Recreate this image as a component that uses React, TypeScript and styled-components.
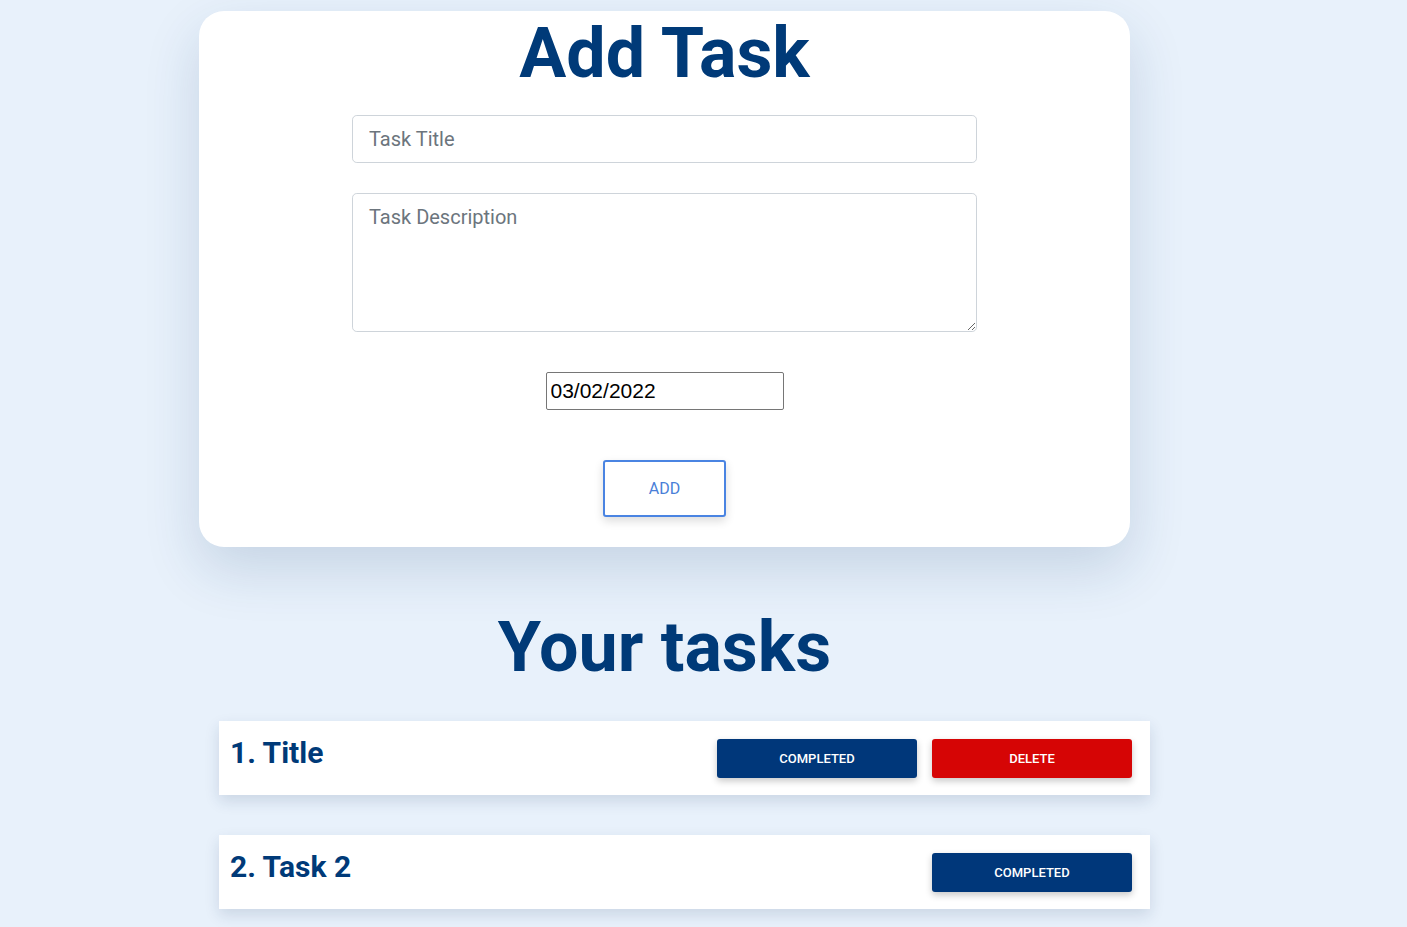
import React from "react";
import styled, { createGlobalStyle } from "styled-components";

const Global = createGlobalStyle`
  html, body { margin: 0; padding: 0; }
  body {
    background: #e8f1fb;
    font-family: Roboto, "Liberation Sans", Arial, sans-serif;
    min-height: 927px;
  }
`;

const Page = styled.div`
  padding: 11px 0 40px 199px;
`;

const Card = styled.section`
  width: 931px;
  box-sizing: border-box;
  background: #fff;
  border-radius: 25px;
  box-shadow: 0 22px 55px rgba(20, 60, 110, 0.16);
  display: flex;
  flex-direction: column;
  align-items: center;
  padding-bottom: 30px;
`;

const BigHeading = styled.h1`
  margin: 0;
  font-family: Roboto, sans-serif;
  font-weight: 700;
  font-size: 70px;
  line-height: 84px;
  color: #003a78;
  text-align: center;
`;

const Form = styled.form`
  display: flex;
  flex-direction: column;
  align-items: center;
  margin-top: 20px;
`;

const TextField = styled.input`
  box-sizing: border-box;
  width: 625px;
  height: 48px;
  padding: 8px 16px;
  font-family: Roboto, sans-serif;
  font-size: 20px;
  line-height: 1.5;
  color: #495057;
  border: 1px solid #ced4da;
  border-radius: 4.8px;
  outline: none;
  &::placeholder { color: #6c757d; }
`;

const TextArea = styled.textarea`
  box-sizing: border-box;
  width: 625px;
  height: 139px;
  margin-top: 30px;
  padding: 8px 16px;
  font-family: Roboto, sans-serif;
  font-size: 20px;
  line-height: 1.5;
  color: #495057;
  border: 1px solid #ced4da;
  border-radius: 4.8px;
  outline: none;
  &::placeholder { color: #6c757d; }
`;

const DateField = styled.input`
  box-sizing: border-box;
  width: 238px;
  height: 38px;
  margin-top: 40px;
  padding: 1px 4px;
  font-family: "Liberation Sans", Arial, sans-serif;
  font-size: 21px;
  color: #000;
  border: 1px solid #767676;
  border-radius: 2px;
  outline: none;
  background: #fff;
`;

const AddButton = styled.button`
  box-sizing: border-box;
  width: 123px;
  height: 57px;
  margin-top: 50px;
  background: #fff;
  border: 2px solid #4a84e2;
  border-radius: 3px;
  box-shadow: 0 4px 10px rgba(0, 0, 0, 0.14);
  color: #4a7fd8;
  font-family: Roboto, sans-serif;
  font-size: 16px;
  font-weight: 400;
  cursor: pointer;
`;

const TasksSection = styled.section`
  width: 931px;
  display: flex;
  flex-direction: column;
  align-items: center;
  margin-top: 58px;
`;

const TaskList = styled.div`
  width: 931px;
  margin-left: 40px;
  margin-top: 32px;
  display: flex;
  flex-direction: column;
  gap: 40px;
`;

const TaskRow = styled.div`
  box-sizing: border-box;
  height: 74px;
  background: #fff;
  box-shadow: 0 6px 14px rgba(20, 50, 90, 0.14);
  display: flex;
  align-items: flex-start;
  padding: 18px 18px 17px 11px;
`;

const TaskTitle = styled.h3`
  flex: 1;
  margin: -2px 0 0;
  font-family: Roboto, sans-serif;
  font-weight: 700;
  font-size: 30px;
  line-height: 32px;
  color: #003a78;
`;

const Actions = styled.div`
  display: flex;
  gap: 15px;
`;

const ActionButton = styled.button<{ $variant: "done" | "delete" }>`
  width: 200px;
  height: 39px;
  border: none;
  border-radius: 3px;
  background: ${(p) => (p.$variant === "delete" ? "#d60505" : "#00377a")};
  color: #fff;
  font-family: Roboto, sans-serif;
  font-size: 13px;
  font-weight: 500;
  text-transform: uppercase;
  box-shadow: 0 3px 7px rgba(0, 0, 0, 0.22);
  cursor: pointer;
`;

const tasks = [
  { id: 1, title: "Title", canDelete: true },
  { id: 2, title: "Task 2", canDelete: false },
];

export default function App() {
  return (
    <>
      <Global />
      <Page>
        <Card>
          <BigHeading>Add Task</BigHeading>
          <Form onSubmit={(e) => e.preventDefault()}>
            <TextField type="text" placeholder="Task Title" />
            <TextArea placeholder="Task Description" />
            <DateField type="text" defaultValue="03/02/2022" />
            <AddButton type="submit">ADD</AddButton>
          </Form>
        </Card>
        <TasksSection>
          <BigHeading>Your tasks</BigHeading>
          <TaskList>
            {tasks.map((t) => (
              <TaskRow key={t.id}>
                <TaskTitle>
                  {t.id}. {t.title}
                </TaskTitle>
                <Actions>
                  <ActionButton $variant="done">Completed</ActionButton>
                  {t.canDelete && <ActionButton $variant="delete">Delete</ActionButton>}
                </Actions>
              </TaskRow>
            ))}
          </TaskList>
        </TasksSection>
      </Page>
    </>
  );
}
